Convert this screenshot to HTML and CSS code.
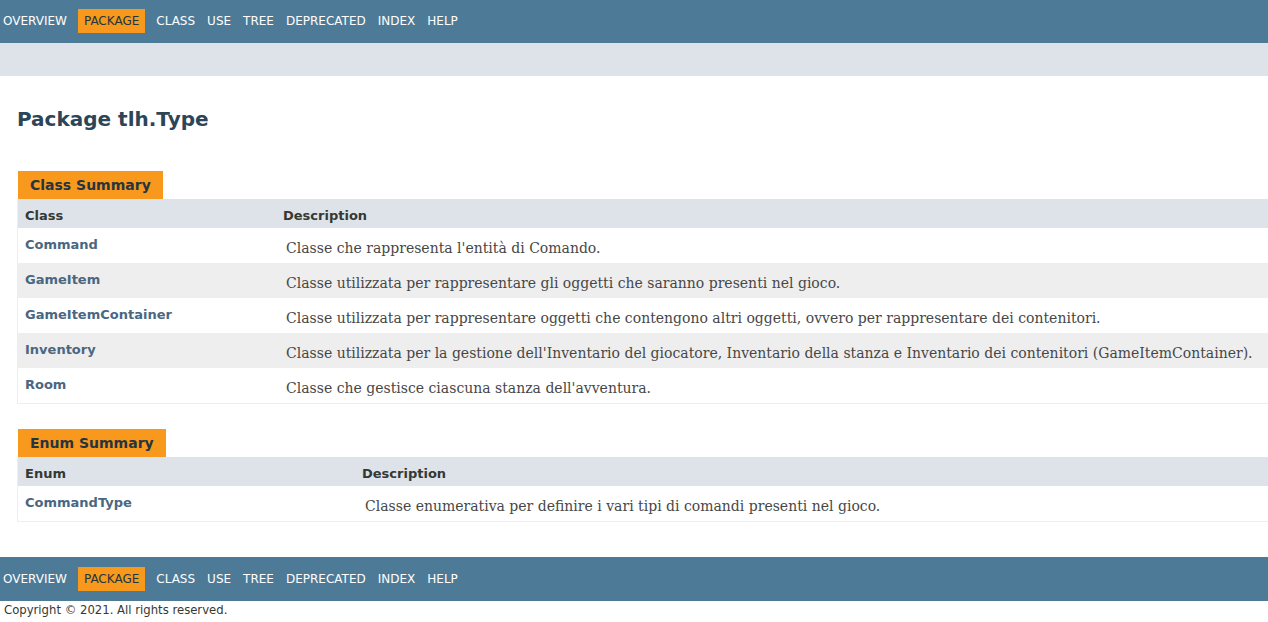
FILE: index.html
```html
<!DOCTYPE html>
<html lang="it">
<head>
<meta charset="utf-8">
<title>tlh.Type</title>
<link rel="stylesheet" href="styles.css">
</head>
<body>
<nav class="navbar">
  <ul class="navlist">
    <li><a href="#">Overview</a></li>
    <li class="current">Package</li>
    <li>Class</li>
    <li>Use</li>
    <li><a href="#">Tree</a></li>
    <li><a href="#">Deprecated</a></li>
    <li><a href="#">Index</a></li>
    <li><a href="#">Help</a></li>
  </ul>
</nav>
<div class="subnav"></div>
<main class="content">
  <h1 class="title">Package tlh.Type</h1>
  <table class="summary class-summary">
    <caption><span>Class Summary</span></caption>
    <colgroup><col class="first"><col></colgroup>
    <thead>
      <tr><th>Class</th><th>Description</th></tr>
    </thead>
    <tbody>
      <tr class="alt"><th class="col-first"><a href="#">Command</a></th><td class="col-last"><div class="block">Classe che rappresenta l'entità di Comando.</div></td></tr>
      <tr class="row"><th class="col-first"><a href="#">GameItem</a></th><td class="col-last"><div class="block">Classe utilizzata per rappresentare gli oggetti che saranno presenti nel gioco.</div></td></tr>
      <tr class="alt"><th class="col-first"><a href="#">GameItemContainer</a></th><td class="col-last"><div class="block">Classe utilizzata per rappresentare oggetti che contengono altri oggetti, ovvero per rappresentare dei contenitori.</div></td></tr>
      <tr class="row"><th class="col-first"><a href="#">Inventory</a></th><td class="col-last"><div class="block">Classe utilizzata per la gestione dell'Inventario del giocatore, Inventario della stanza e Inventario dei contenitori (GameItemContainer).</div></td></tr>
      <tr class="alt"><th class="col-first"><a href="#">Room</a></th><td class="col-last"><div class="block">Classe che gestisce ciascuna stanza dell'avventura.</div></td></tr>
    </tbody>
  </table>
  <table class="summary enum-summary">
    <caption><span>Enum Summary</span></caption>
    <colgroup><col class="first"><col></colgroup>
    <thead>
      <tr><th>Enum</th><th>Description</th></tr>
    </thead>
    <tbody>
      <tr class="alt"><th class="col-first"><a href="#">CommandType</a></th><td class="col-last"><div class="block">Classe enumerativa per definire i vari tipi di comandi presenti nel gioco.</div></td></tr>
    </tbody>
  </table>
</main>
<footer class="footer">
  <nav class="navbar bottom">
    <ul class="navlist">
      <li><a href="#">Overview</a></li>
      <li class="current">Package</li>
      <li>Class</li>
      <li>Use</li>
      <li><a href="#">Tree</a></li>
      <li><a href="#">Deprecated</a></li>
      <li><a href="#">Index</a></li>
      <li><a href="#">Help</a></li>
    </ul>
  </nav>
  <p class="legal">Copyright © 2021. All rights reserved.</p>
</footer>
</body>
</html>
```

FILE: styles.css
```css
html, body {
  margin: 0;
  padding: 0;
}
body {
  background: #ffffff;
  color: #353833;
  font-family: "DejaVu Sans", Arial, sans-serif;
  font-size: 14px;
}
a {
  text-decoration: none;
  color: #4A6782;
}

.navbar {
  background: #4D7A97;
  color: #ffffff;
  height: 43px;
  box-sizing: border-box;
  padding-top: 9px;
  font-size: 12px;
  overflow: hidden;
}
.navbar.bottom {
  height: 44px;
  padding-top: 10px;
}
.navlist {
  display: flex;
  margin: 0;
  padding: 0;
  list-style: none;
}
.navlist li {
  padding: 5px 6px;
  text-transform: uppercase;
  line-height: 14px;
}
.navlist li:first-child {
  padding-left: 3px;
}
.navlist a {
  color: #ffffff;
}
.navlist .current {
  background: #F8981D;
  color: #253441;
  margin: 0 5px;
}

.subnav {
  background: #dee3e9;
  height: 33px;
}

.content {
  padding: 0 0 0 17px;
  overflow: hidden;
}
.title {
  margin: 32px 0 0 0;
  font-size: 20px;
  line-height: 23px;
  color: #2c4557;
}

.summary {
  width: 1280px;
  table-layout: fixed;
  border-spacing: 0;
  border-left: 1px solid #EEE;
  border-right: 1px solid #EEE;
  border-bottom: 1px solid #EEE;
}
.class-summary {
  margin-top: 30px;
}
.enum-summary {
  margin-top: 15px;
}
.class-summary col.first {
  width: 258px;
}
.enum-summary col.first {
  width: 337px;
}
.summary caption {
  text-align: left;
  padding: 10px 0 0 1px;
  margin: 0;
  color: #253441;
  font-weight: bold;
  white-space: nowrap;
}
.summary caption span {
  display: block;
  width: max-content;
  background: #F8981D;
  padding: 6px 12px 6px 12px;
  height: 16px;
  line-height: 16px;
}
.summary thead th {
  background: #dee3e9;
  text-align: left;
  font-size: 13px;
  font-weight: bold;
  line-height: 18px;
  padding: 8px 3px 3px 7px;
  vertical-align: top;
}
.summary tbody th,
.summary tbody td {
  text-align: left;
  vertical-align: top;
  padding: 8px 3px 3px 7px;
}
.col-first {
  font-size: 13px;
  line-height: 17px;
  white-space: nowrap;
  font-weight: bold;
}
.col-first a {
  font-weight: bold;
}
.alt th, .alt td {
  background: #ffffff;
}
.row th, .row td {
  background: #EEEEEF;
}
.block {
  font-family: "DejaVu Serif", Georgia, "Times New Roman", serif;
  font-size: 14px;
  line-height: 19px;
  color: #474747;
  margin: 3px 10px 2px 3px;
}

.footer {
  margin-top: 35px;
}
.legal {
  margin: 0 0 0 4px;
  font-size: 11.67px;
  line-height: 14px;
  padding-top: 2px;
}
```
